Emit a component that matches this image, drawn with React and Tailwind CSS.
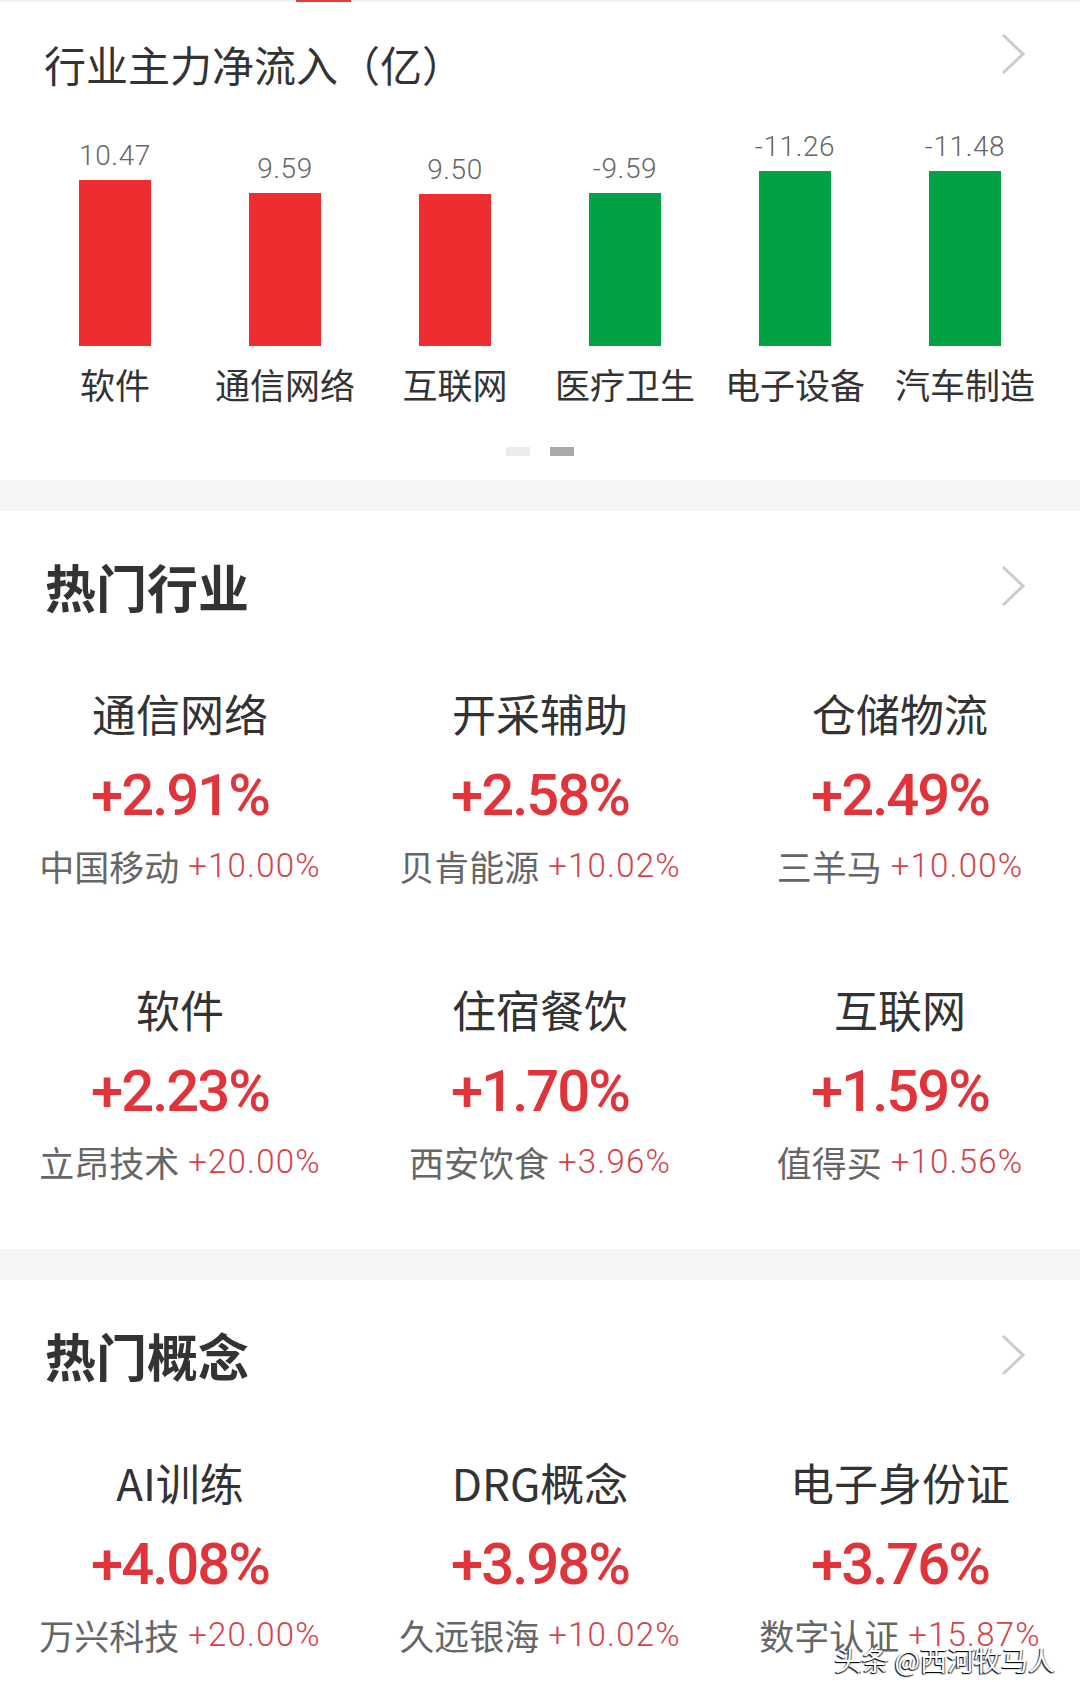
import React from "react";

const CJK = "font-['Noto_Sans_CJK_SC',sans-serif]";
const NUM = "font-['Roboto','Noto_Sans_CJK_SC',sans-serif]";

const flows = [
  { name: "软件", value: "10.47", bar: "h-[166px] bg-[#ee2d30]" },
  { name: "通信网络", value: "9.59", bar: "h-[153px] bg-[#ee2d30]" },
  { name: "互联网", value: "9.50", bar: "h-[152px] bg-[#ee2d30]" },
  { name: "医疗卫生", value: "-9.59", bar: "h-[153px] bg-[#00a244]" },
  { name: "电子设备", value: "-11.26", bar: "h-[175px] bg-[#00a244]" },
  { name: "汽车制造", value: "-11.48", bar: "h-[175px] bg-[#00a244]" },
];

const industries = [
  { name: "通信网络", pct: "+2.91%", stock: "中国移动", stockPct: "+10.00%" },
  { name: "开采辅助", pct: "+2.58%", stock: "贝肯能源", stockPct: "+10.02%" },
  { name: "仓储物流", pct: "+2.49%", stock: "三羊马", stockPct: "+10.00%" },
  { name: "软件", pct: "+2.23%", stock: "立昂技术", stockPct: "+20.00%" },
  { name: "住宿餐饮", pct: "+1.70%", stock: "西安饮食", stockPct: "+3.96%" },
  { name: "互联网", pct: "+1.59%", stock: "值得买", stockPct: "+10.56%" },
];

const concepts = [
  { name: "AI训练", pct: "+4.08%", stock: "万兴科技", stockPct: "+20.00%" },
  { name: "DRG概念", pct: "+3.98%", stock: "久远银海", stockPct: "+10.02%" },
  { name: "电子身份证", pct: "+3.76%", stock: "数字认证", stockPct: "+15.87%" },
];

// 右箭头
const Chevron = ({ className = "" }) => (
  <svg width="26" height="42" viewBox="0 0 26 42" className={className}>
    <polyline points="3,2 23,21 3,40" fill="none" stroke="#cbcbcb" strokeWidth="3" />
  </svg>
);

const Divider = () => <div className="h-[31px] bg-[#f4f5f7]" />;

const HotItem = ({ item }) => (
  <div className="flex flex-col items-center">
    <div className={`${CJK} h-[44px] text-[44px] leading-[44px] text-[#333]`}>
      {item.name}
    </div>
    <div className={`${NUM} mt-[31px] h-[58px] text-[58px] leading-[58px] font-medium tracking-[-2px] text-[#e1343a]`}>
      {item.pct}
    </div>
    <div className="mt-[24px] flex items-center h-[35px]">
      <span className={`${CJK} text-[35px] leading-[35px] text-[#666]`}>{item.stock}</span>
      <span className={`${NUM} ml-[9px] text-[33px] leading-[35px] font-light tracking-[1.2px] text-[#d2434a]`}>
        {item.stockPct}
      </span>
    </div>
  </div>
);

const SectionHeader = ({ title }) => (
  <div className="flex items-center justify-between pl-[45px] pr-[54px] pt-[50px]">
    <h2 className={`${CJK} text-[51px] leading-[50px] font-bold text-[#333]`}>{title}</h2>
    <Chevron />
  </div>
);

export default function App() {
  return (
    <div className="w-[1080px] h-[1700px] bg-white flex flex-col overflow-hidden">
      {/* tab indicator */}
      <div className="h-[2px] bg-[#f0f0f0]">
        <div className="ml-[296px] w-[55px] h-full bg-[#e8383c]" />
      </div>

      {/* 行业主力净流入 */}
      <div className="flex items-start justify-between pl-[44px] pr-[54px] pt-[41px]">
        <h1 className={`${CJK} text-[42px] leading-[42px] text-[#333]`}>行业主力净流入（亿）</h1>
        <Chevron className="mt-[-10px]" />
      </div>

      <div className="grid grid-cols-6 mx-[30px] mt-[48px]">
        {flows.map((f) => (
          <div key={f.name} className="flex flex-col items-center">
            <div className="h-[213px] flex flex-col items-center justify-end">
              <span className={`${NUM} text-[28px] leading-[28px] font-light tracking-[0.6px] text-[#666] mb-[10px]`}>
                {f.value}
              </span>
              <div className={`w-[72px] ${f.bar}`} />
            </div>
            <span className={`${CJK} mt-[20px] text-[35px] leading-[35px] text-[#333] whitespace-nowrap`}>
              {f.name}
            </span>
          </div>
        ))}
      </div>

      <div className="flex justify-center gap-[20px] mt-[46px] mb-[24px]">
        <div className="w-[24px] h-[9px] bg-[#ececec]" />
        <div className="w-[24px] h-[9px] bg-[#a9a9a9]" />
      </div>

      <Divider />

      {/* 热门行业 */}
      <SectionHeader title="热门行业" />
      <div className="grid grid-cols-3 gap-y-[104px] mt-[80px] pb-[70px]">
        {industries.map((it) => (
          <HotItem key={it.name} item={it} />
        ))}
      </div>

      <Divider />

      {/* 热门概念 */}
      <div className="relative flex-1">
        <SectionHeader title="热门概念" />
        <div className="grid grid-cols-3 mt-[80px]">
          {concepts.map((it) => (
            <HotItem key={it.name} item={it} />
          ))}
        </div>
        <div
          className={`${CJK} absolute right-[25px] bottom-[25px] text-[27px] leading-[30px] text-white [text-shadow:-1px_1px_1px_#000,1px_1px_1px_rgba(0,0,0,0.6)]`}
        >
          头条 @西河牧马人
        </div>
      </div>
    </div>
  );
}
